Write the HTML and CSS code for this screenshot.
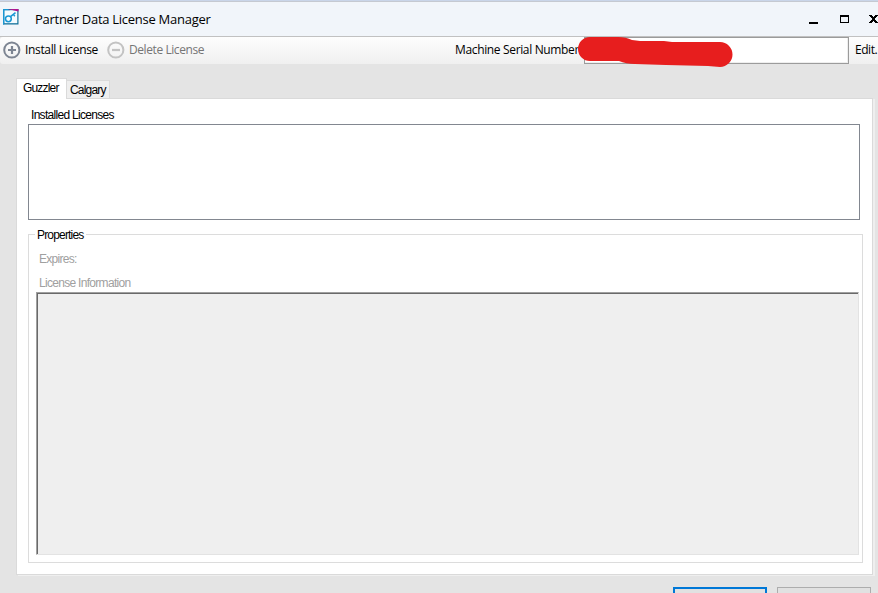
FILE: index.html
```html
<!DOCTYPE html>
<html lang="en">
<head>
  <meta charset="UTF-8">
  <title>Partner Data License Manager</title>
  <link rel="stylesheet" href="styles.css">
</head>
<body>

  <div class="window">
    <header class="titlebar">
      <svg class="app-icon" width="17" height="17" viewBox="0 0 17 17">
        <path d="M1 1h15.5v15.5H1z" fill="#12719b"/>
        <path d="M2.3 2.2h13v13h-13z" fill="#f4fbff"/>
        <path d="M1 1h5l2 1.2H2.3V16.5H1z" fill="#1897d4"/>
        <path d="M6 1h10.5v2.6L12 2.6z" fill="#b0168f"/>
        <circle cx="6.4" cy="10.8" r="2.9" fill="none" stroke="#1897d4" stroke-width="1.5"/>
        <path d="M8.5 8.6l5-4M11.4 6.4l1.4 1.8" fill="none" stroke="#1897d4" stroke-width="1.5"/>
      </svg>
      <h1 class="title">Partner Data License Manager</h1>
      <div class="window-buttons">
        <svg width="70" height="14" viewBox="0 0 70 14" shape-rendering="crispEdges">
          <path d="M1 10h9v2H1z"/>
          <path d="M32 3h9v8h-9zM33 5v5h7V5z" fill-rule="evenodd"/>
          <path d="M61 3h3v1h1v1h1v-1h1v-1h3v1h-1v1h-1v1h-1v2h1v1h1v1h1v1h-3v-1h-1v-1h-1v1h-1v1h-3v-1h1v-1h1v-1h1v-2h-1v-1h-1v-1h-1z"/>
        </svg>
      </div>
    </header>

    <div class="toolbar">
      <div class="tool">
        <svg width="18" height="18" viewBox="0 0 18 18" fill="none" stroke="#7d8592">
          <circle cx="8.8" cy="9" r="7.6" stroke-width="2"/>
          <path d="M5 9h8M9 5v8" stroke-width="2.2"/>
        </svg>
        <span class="install">Install License</span>
      </div>
      <div class="tool disabled">
        <svg width="18" height="18" viewBox="0 0 18 18" fill="none" stroke="#c3c3c3">
          <circle cx="8.8" cy="9" r="7.6" stroke-width="2"/>
          <path d="M5 9h8" stroke-width="2.2"/>
        </svg>
        <span class="delete">Delete License</span>
      </div>
      <div class="serial">
        <span class="serial-label">Machine Serial Number</span>
        <div class="serial-field">
          <svg class="redaction" width="156" height="32" viewBox="0 0 156 32">
            <path d="M12 1H40Q48 1 54 4L62 5H86L94 6H142A12 12 0 0 1 142 31L130 30L88 29L57 28Q48 28 41 25H12A12 12 0 0 1 12 1z" fill="#e71e1e"/>
          </svg>
        </div>
        <span class="edit">Edit.</span>
      </div>
    </div>

    <main class="content">
      <nav class="tabs">
        <div class="tab active"><span>Guzzler</span></div>
        <div class="tab"><span>Calgary</span></div>
      </nav>
      <section class="tab-page">
        <div class="list-label"><span>Installed Licenses</span></div>
        <div class="list"></div>
        <div class="group">
          <div class="group-title"><span>Properties</span></div>
          <div class="field-label"><span>Expires:</span></div>
          <div class="field-label"><span>License Information</span></div>
          <div class="info-box"></div>
        </div>
      </section>
      <footer class="buttons">
        <div class="button primary"></div>
        <div class="button"></div>
      </footer>
    </main>
  </div>

</body>
</html>
```

FILE: styles.css
```css
* {
  box-sizing: border-box;
}

body {
  margin: 0;
  width: 878px;
  height: 593px;
  overflow: hidden;
  background: #e4e4e4;
  color: #000;
  font-family: "Liberation Sans", Arial, sans-serif;
  font-size: 12px;
  white-space: nowrap;
}

svg {
  display: block;
  flex: none;
}

.window {
  height: 593px;
  overflow: hidden;
}

.titlebar {
  display: flex;
  height: 37px;
  padding: 7px 0 0 2px;
  background: linear-gradient(#c9d5e9 1px, #c5c9d1 1px, #c5c9d1 2px, #f1f5fa 2px);
  border-bottom: 1px solid #c1c1c1;
}

.app-icon {
  margin-top: 1px;
}

.title {
  margin: 0 0 0 16px;
  font: 13px/25px "Open Sans", sans-serif;
  letter-spacing: -0.27px;
}

.window-buttons {
  margin: 5px 0 0 auto;
  width: 70px;
}

.toolbar {
  display: flex;
  height: 27px;
  padding-left: 3px;
  background: linear-gradient(#fdfdfd, #f0f0f0);
  border-radius: 3px 0 0 3px;
  font: 12px/26px "Open Sans", sans-serif;
  letter-spacing: -0.35px;
}

.tool {
  display: flex;
  align-items: center;
  gap: 4px;
  width: 104px;
  height: 26px;
}

.disabled {
  color: #757575;
  letter-spacing: -0.42px;
}

.serial {
  display: flex;
  width: 423px;
  margin-left: auto;
}

.serial-label {
  flex: none;
  width: 129px;
}

.serial-field {
  position: relative;
  flex: none;
  width: 265px;
  border: 1px solid #9b9b9b;
  background: #fff;
  box-shadow: inset -1px -1px #eee;
}

/* marker stroke over the serial number */
.redaction {
  position: absolute;
  left: -7px;
  top: -2px;
}

.edit {
  margin-left: 6px;
  letter-spacing: -0.45px;
}

.content {
  padding: 14px 0 0 16px;
}

.tabs {
  display: flex;
  align-items: flex-end;
  height: 20px;
}

.tab {
  height: 18px;
  width: 43px;
  padding-left: 3px;
  line-height: 18px;
  background: #efefef;
  border: 1px solid #dadada;
  border-width: 1px 1px 0 0;
}

.tab.active {
  position: relative;
  height: 21px;
  width: 51px;
  margin-bottom: -1px;
  padding-left: 6px;
  background: #fff;
  border-left-width: 1px;
}

.tab-page {
  width: 857px;
  height: 477px;
  padding: 9px 9px 0 11px;
  background: #fff;
  border: 1px solid #dadada;
  box-shadow: 2px 1px #efefef;
}

.list-label {
  height: 16px;
  padding-left: 3px;
  line-height: 14px;
}

.list {
  width: 832px;
  height: 96px;
  border: 1px solid #828790;
}

.group {
  width: 835px;
  height: 329px;
  margin-top: 14px;
  border: 1px solid #dcdcdc;
}

.group-title {
  width: 51px;
  height: 14px;
  margin: -7px 0 0 6px;
  padding-left: 2px;
  line-height: 14px;
  background: #fff;
}

.field-label {
  height: 24px;
  padding: 10px 0 0 10px;
  line-height: 14px;
  color: #a0a0a0;
}

.info-box {
  width: 823px;
  height: 263px;
  margin: 2px 0 0 7px;
  background: #efefef;
  border: 1px solid;
  border-color: #a0a0a0 #e3e3e3 #e3e3e3 #a0a0a0;
  box-shadow: inset 1px 1px #696969;
}

.list-label span,
.field-label span {
  letter-spacing: -0.7px;
}

.group-title span,
.tab span {
  letter-spacing: -0.82px;
}

.buttons {
  display: flex;
  justify-content: flex-end;
  gap: 10px;
  padding: 12px 7px 0 0;
}

.button {
  width: 94px;
  height: 24px;
  background: #e1e1e1;
  border: 1px solid #adadad;
}

.button.primary {
  border: 2px solid #0078d7;
}
```
